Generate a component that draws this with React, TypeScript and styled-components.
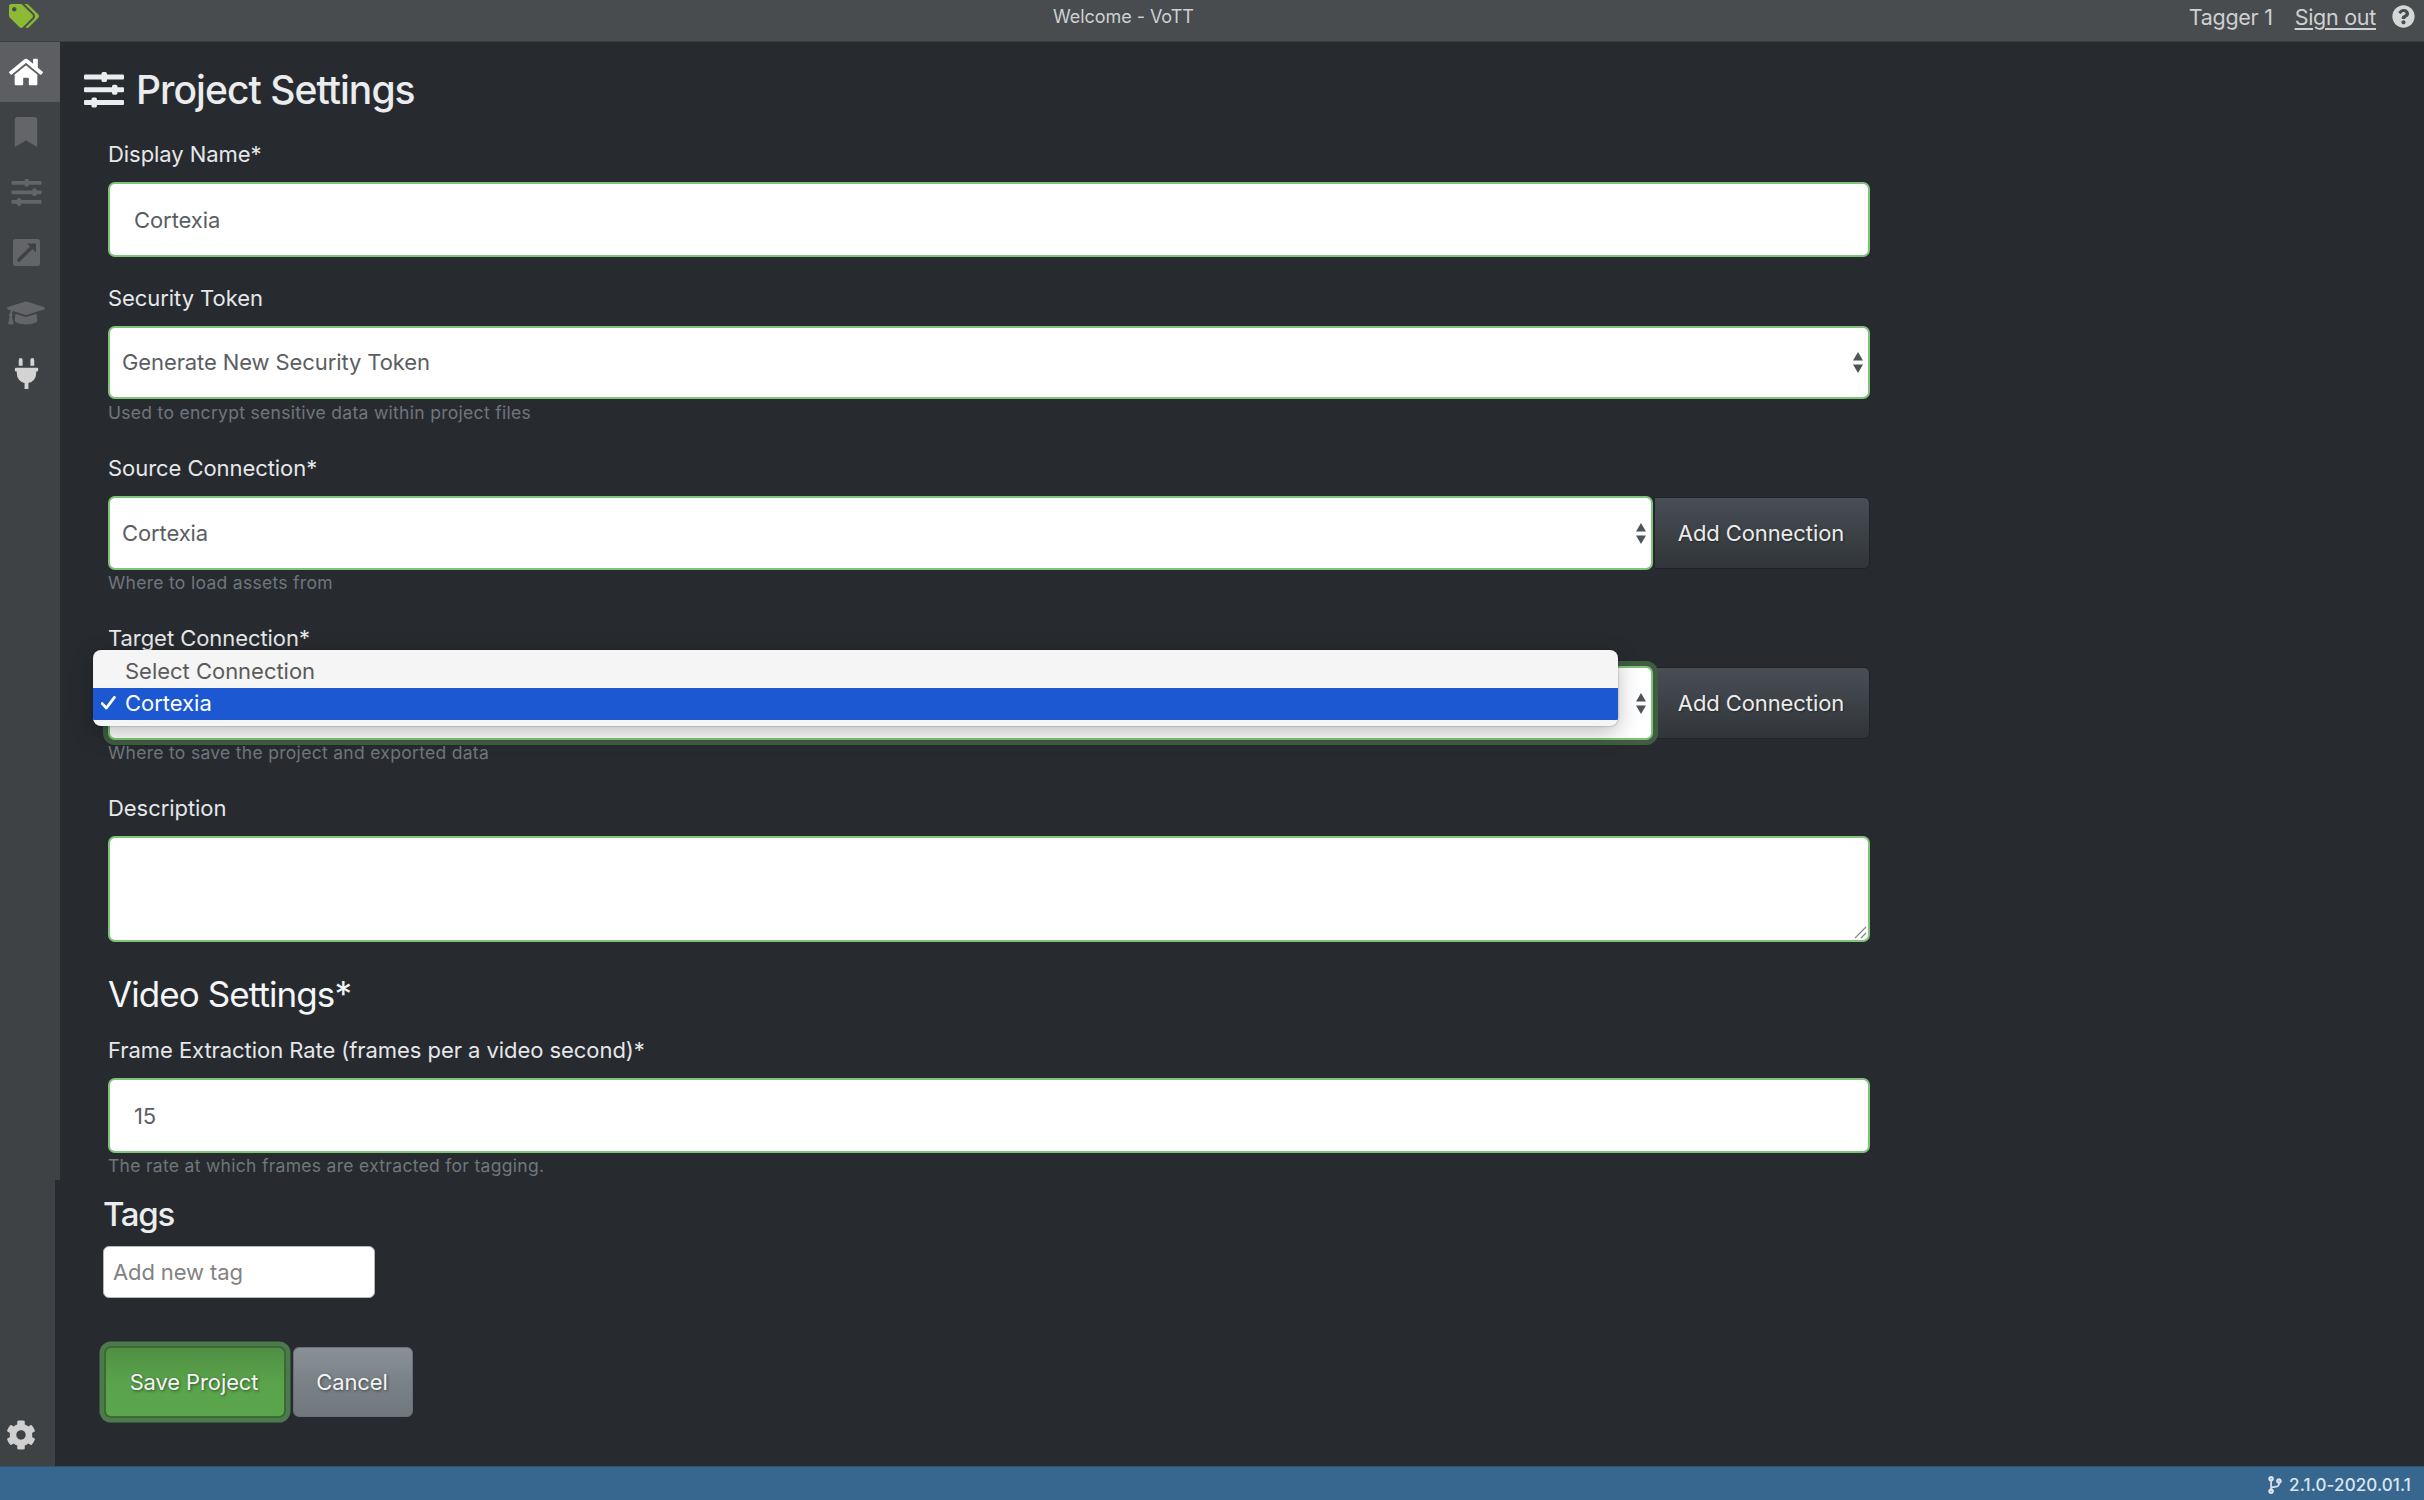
import React from "react";
import styled, { createGlobalStyle, css } from "styled-components";
import {
  FaBookmark,
  FaCodeBranch,
  FaCog,
  FaGraduationCap,
  FaHome,
  FaPlug,
  FaQuestionCircle,
  FaTags,
} from "react-icons/fa";

const GlobalStyle = createGlobalStyle`
  *, *::before, *::after { box-sizing: border-box; }
  body {
    margin: 0;
    background: #272b30;
    font-family: Inter, "Liberation Sans", sans-serif;
    font-size: 22px;
    font-weight: 425;
    color: #e6e7e9;
    overflow: hidden;
  }
  svg { display: block; flex: none; }
`;

const Shell = styled.div`
  display: flex;
  flex-direction: column;
  width: 2424px;
  height: 1500px;
`;

const TopBar = styled.header`
  display: grid;
  grid-template-columns: 1044px auto 1fr;
  height: 42px;
  padding: 0 9px;
  background: #484c4e;
  border-bottom: 1px solid #3b3f42;
  color: #cfd0d1;
`;

const Brand = styled.div`
  padding-top: 1px;
  color: #8cba35;
`;

const WindowTitle = styled.div`
  font-size: 18px;
  line-height: 33px;
  letter-spacing: -0.05px;
`;

const Account = styled.div`
  display: flex;
  justify-content: flex-end;
  line-height: 35px;
  font-size: 21.5px;
  letter-spacing: -0.28px;
`;

const SignOut = styled.a`
  margin: 0 16px 0 22px;
  text-decoration: underline;
  text-decoration-thickness: 2px;
  text-underline-offset: 3px;
`;

const HelpMark = styled.span`
  padding-top: 5px;
  color: #d5d6d6;
`;

const Body = styled.div`
  display: flex;
  flex: 1;
  min-height: 0;
`;

const Sidebar = styled.nav`
  display: flex;
  flex-direction: column;
  width: 60px;
`;

const NavList = styled.div`
  flex: 1;
  background: #3e4244;
`;

const NavItem = styled.div<{ $state?: "active" | "enabled" }>`
  display: flex;
  align-items: center;
  justify-content: center;
  height: 60.4px;
  padding: 0 8px 1px 0;
  color: #636568;
  ${(p) => p.$state === "enabled" && css`color: #d3d3d3;`}
  ${(p) => p.$state === "active" && css`color: #fff; background: #5d5e62;`}
`;

const NavFooter = styled.div`
  display: flex;
  align-items: flex-end;
  width: 55px;
  height: 286px;
  padding: 0 0 16px 6px;
  background: #3e4244;
  color: #cfcfcf;
`;

const Page = styled.main`
  flex: 1;
  padding: 24px 0 0 24px;
`;

const PageTitle = styled.h1`
  display: flex;
  align-items: center;
  gap: 12px;
  height: 47px;
  margin: 0;
  font-size: 39px;
  font-weight: 540;
  letter-spacing: -0.95px;
  color: #ebecee;
`;

const Form = styled.form`
  display: flex;
  flex-direction: column;
  gap: 28px;
  width: 1762px;
  margin: 28px 0 0 24px;
`;

const FieldBox = styled.div`
  position: relative;
`;

const Label = styled.label`
  display: block;
  height: 28px;
  margin-bottom: 13px;
  line-height: 27px;
  letter-spacing: -0.06px;
`;

const Hint = styled.small`
  display: block;
  height: 27px;
  line-height: 25px;
  font-size: 17.5px;
  letter-spacing: 0.3px;
  color: #70767c;
`;

const control = css`
  background: #fff;
  border: 2px solid #7fc47a;
  border-radius: 7px;
  color: #5a5e63;
`;

const Input = styled.div`
  ${control}
  display: flex;
  align-items: center;
  height: 75px;
  padding: 0 24px;
  letter-spacing: -0.08px;
`;

const Select = styled.div<{ $focused?: boolean; $compact?: boolean }>`
  ${control}
  position: relative;
  display: flex;
  flex: 1;
  align-items: center;
  justify-content: space-between;
  height: ${(p) => (p.$compact ? 73 : 74)}px;
  margin-bottom: ${(p) => (p.$compact ? 1 : 0)}px;
  padding: 0 5px ${(p) => (p.$compact ? 1 : 0)}px 12px;
  letter-spacing: -0.1px;
  ${(p) => p.$focused && css`box-shadow: 0 0 0 5px #3f5e41;`}
`;

const InputRow = styled.div`
  display: flex;
`;

const TextArea = styled.div`
  ${control}
  display: flex;
  align-items: flex-end;
  justify-content: flex-end;
  height: 106px;
`;

const SlateButton = styled.button`
  width: 216px;
  height: 72px;
  margin: 1px 0 0 1px;
  padding: 0 2px 0 0;
  border: 1px solid #202327;
  border-radius: 0 6px 6px 0;
  background: linear-gradient(#484e55, #3a3f44 60%, #313539);
  color: #ececec;
  font: inherit;
  letter-spacing: -0.1px;
  text-shadow: 1px 1px 2px rgba(0, 0, 0, 0.4);
`;

const Menu = styled.ul`
  position: absolute;
  top: 25px;
  left: -15px;
  width: 1525px;
  height: 76px;
  margin: 0;
  padding: 6px 0 0;
  list-style: none;
  border-radius: 8px;
  background: #f5f5f5;
  box-shadow: 0 7px 22px rgba(0, 0, 0, 0.25), 0 0 2px rgba(0, 0, 0, 0.4);
  overflow: hidden;
`;

const Option = styled.li<{ $selected?: boolean }>`
  display: grid;
  grid-template-columns: 24px 1fr;
  align-items: center;
  height: 32px;
  padding: 0 0 3px 8px;
  letter-spacing: -0.02px;
  color: #5b5b5b;
  ${(p) => p.$selected && css`background: #1c58d2; color: #fff;`}
`;

const SectionTitle = styled.h2`
  height: 44px;
  margin: 2px 0 -7px;
  line-height: 44px;
  font-size: 35px;
  font-weight: 425;
  letter-spacing: -0.92px;
  color: #f4f5f6;
`;

const Tags = styled.section`
  margin: 14px 0 0 19px;
`;

const TagsTitle = styled.h3`
  height: 40px;
  margin: 0 0 12px;
  line-height: 40px;
  font-size: 33px;
  font-weight: 540;
  letter-spacing: -1.3px;
  color: #ebecee;
`;

const TagInput = styled.div`
  display: flex;
  align-items: center;
  width: 272px;
  height: 52px;
  padding-left: 9px;
  border: 1px solid #b5b5b7;
  border-radius: 6px;
  background: #fff;
  color: #828282;
  letter-spacing: -0.12px;
`;

const Actions = styled.div`
  display: flex;
  gap: 8px;
  margin: 49px 0 0 21px;
`;

const ActionButton = styled.button<{ $primary?: boolean }>`
  height: 70px;
  width: ${(p) => (p.$primary ? 180 : 120)}px;
  padding: 0 2px 0 0;
  border: 1px solid #6a7076;
  border-radius: 6px;
  background: linear-gradient(#8a9196, #7a8288 50%, #70787d);
  color: #f4f4f4;
  font: inherit;
  letter-spacing: -0.12px;
  text-shadow: 1px 1px 3px rgba(0, 0, 0, 0.5);
  ${(p) =>
    p.$primary &&
    css`
      border-color: #3c6e34;
      background: linear-gradient(#508f44, #5aa34b 50%, #5ba64d);
      box-shadow: 0 0 0 1px #3c6838, 0 0 0 5.5px #4d7a4c;
    `}
`;

const StatusBar = styled.footer`
  display: flex;
  align-items: center;
  justify-content: flex-end;
  gap: 5px;
  height: 34px;
  padding: 2px 13px 0 0;
  background: #37678f;
  border-top: 1px solid #305373;
  color: #dbe5ee;
  font-size: 17px;
  font-weight: 500;
  letter-spacing: 0.12px;
`;

const Sliders = ({ width, height }: { width: number; height: number }) => (
  <svg width={width} height={height} viewBox="0 0 40 36" fill="currentColor">
    <rect x="0" y="2.5" width="40" height="5" rx="1" />
    <rect x="0" y="15.2" width="40" height="5" rx="1" />
    <rect x="0" y="28" width="40" height="5" rx="1" />
    <rect x="17.5" y="0" width="5.4" height="10" rx="1.6" />
    <rect x="28" y="12.7" width="5.4" height="10" rx="1.6" />
    <rect x="7.5" y="25.5" width="5.4" height="10" rx="1.6" />
  </svg>
);

const ExportSquare = () => (
  <svg width="27" height="27" viewBox="0 0 27 27">
    <rect width="27" height="27" rx="2.5" fill="currentColor" />
    <path d="M6 21 18.5 8.5" stroke="#3e4244" strokeWidth="3.6" strokeLinecap="round" />
    <path d="M14 4.5H22a1 1 0 0 1 1 1V13.5z" fill="#3e4244" />
  </svg>
);

const Arrows = () => (
  <svg width="10" height="21" viewBox="0 0 10 21" fill="#4f5459">
    <path d="M5 0 10 8.5H0zM0 12.5H10L5 21z" />
  </svg>
);

const Check = () => (
  <svg width="15" height="14" viewBox="0 0 15 14" fill="none" stroke="#fff" strokeWidth="2.8">
    <path d="M1.2 7.6 5.4 12 13.4 1.4" strokeLinecap="round" strokeLinejoin="round" />
  </svg>
);

const Grip = () => (
  <svg width="14" height="14" viewBox="0 0 14 14" stroke="#888" strokeWidth="1.2">
    <path d="M1 12 12 1M7 12 12 7" />
  </svg>
);

interface FieldProps {
  label: string;
  hint?: string;
  children: React.ReactNode;
}

const Field = ({ label, hint, children }: FieldProps) => (
  <FieldBox>
    <Label>{label}</Label>
    {children}
    {hint && <Hint>{hint}</Hint>}
  </FieldBox>
);

export default function App() {
  return (
    <Shell>
      <GlobalStyle />
      <TopBar>
        <Brand>
          <FaTags size={30} />
        </Brand>
        <WindowTitle>Welcome - VoTT</WindowTitle>
        <Account>
          <span>Tagger 1</span>
          <SignOut>Sign out</SignOut>
          <HelpMark>
            <FaQuestionCircle size={23} />
          </HelpMark>
        </Account>
      </TopBar>
      <Body>
        <Sidebar>
          <NavList>
            <NavItem $state="active"><FaHome size={34} /></NavItem>
            <NavItem><FaBookmark size={30} /></NavItem>
            <NavItem><Sliders width={31} height={27} /></NavItem>
            <NavItem><ExportSquare /></NavItem>
            <NavItem><FaGraduationCap size={38} /></NavItem>
            <NavItem $state="enabled"><FaPlug size={31} /></NavItem>
          </NavList>
          <NavFooter><FaCog size={30} /></NavFooter>
        </Sidebar>
        <Page>
          <PageTitle>
            <Sliders width={40} height={36} />
            Project Settings
          </PageTitle>
          <Form>
            <Field label="Display Name*">
              <Input>Cortexia</Input>
            </Field>
            <Field label="Security Token" hint="Used to encrypt sensitive data within project files">
              <Select $compact>Generate New Security Token<Arrows /></Select>
            </Field>
            <Field label="Source Connection*" hint="Where to load assets from">
              <InputRow>
                <Select>Cortexia<Arrows /></Select>
                <SlateButton type="button">Add Connection</SlateButton>
              </InputRow>
            </Field>
            <Field label="Target Connection*" hint="Where to save the project and exported data">
              <InputRow>
                <Select $focused><span /><Arrows /></Select>
                <SlateButton type="button">Add Connection</SlateButton>
              </InputRow>
              <Menu>
                <Option><span />Select Connection</Option>
                <Option $selected><Check />Cortexia</Option>
              </Menu>
            </Field>
            <Field label="Description">
              <TextArea><Grip /></TextArea>
            </Field>
            <SectionTitle>Video Settings*</SectionTitle>
            <Field
              label="Frame Extraction Rate (frames per a video second)*"
              hint="The rate at which frames are extracted for tagging."
            >
              <Input>15</Input>
            </Field>
          </Form>
          <Tags>
            <TagsTitle>Tags</TagsTitle>
            <TagInput>Add new tag</TagInput>
          </Tags>
          <Actions>
            <ActionButton $primary>Save Project</ActionButton>
            <ActionButton>Cancel</ActionButton>
          </Actions>
        </Page>
      </Body>
      <StatusBar>
        <FaCodeBranch size={18} />
        2.1.0-2020.01.1
      </StatusBar>
    </Shell>
  );
}
